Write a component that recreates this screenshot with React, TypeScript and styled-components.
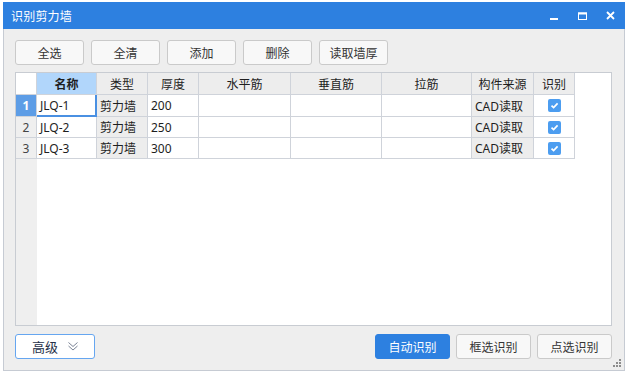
import React from "react";
import styled, { createGlobalStyle } from "styled-components";

const colors = {
  blue: "#2d80e0",
  border: "#c6cbd3",
  grid: "#cfd3da",
  panel: "#eeeeee",
  text: "#222222",
};

interface Row {
  name: string;
  type: string;
  thick: string;
  source: string;
}

const rows: Row[] = [
  { name: "JLQ-1", type: "剪力墙", thick: "200", source: "CAD读取" },
  { name: "JLQ-2", type: "剪力墙", thick: "250", source: "CAD读取" },
  { name: "JLQ-3", type: "剪力墙", thick: "300", source: "CAD读取" },
];

const columns = ["名称", "类型", "厚度", "水平筋", "垂直筋", "拉筋", "构件来源", "识别"];

const GlobalStyle = createGlobalStyle`
  html, body {
    margin: 0;
    background: #fff;
  }
  body {
    font-family: "Noto Sans", "Noto Sans CJK SC", sans-serif;
    font-size: 12px;
    color: ${colors.text};
  }
  * {
    box-sizing: border-box;
  }
`;

const Check = () => (
  <CheckBox>
    <svg width="9" height="9" viewBox="0 0 9 9">
      <path d="M1.5 4.6 L3.6 6.6 L7.6 2.4" stroke="#fff" strokeWidth="1.7" fill="none" />
    </svg>
  </CheckBox>
);

const DoubleDown = () => (
  <svg width="10" height="9" viewBox="0 0 10 9">
    <path d="M0.5 0.5 L5 4.5 L9.5 0.5 M0.5 4 L5 8 L9.5 4" stroke="#7b8496" strokeWidth="1" fill="none" />
  </svg>
);

export default function App() {
  return (
    <>
      <GlobalStyle />
      <Window>
        <TitleBar>
          <Title>识别剪力墙</Title>
          <Controls>
            <Ctrl>
              <svg width="8" height="8" viewBox="0 0 8 8">
                <rect x="0" y="6" width="8" height="2" fill="#fff" />
              </svg>
            </Ctrl>
            <Ctrl>
              <svg width="9" height="8" viewBox="0 0 9 8">
                <rect x="0.5" y="1" width="8" height="6.5" stroke="#fff" strokeWidth="1" fill="none" />
                <rect x="0" y="0.5" width="9" height="2" fill="#fff" />
              </svg>
            </Ctrl>
            <Ctrl>
              <svg width="9" height="9" viewBox="0 0 9 9">
                <path d="M1 1 L8 8 M8 1 L1 8" stroke="#fff" strokeWidth="1.8" />
              </svg>
            </Ctrl>
          </Controls>
        </TitleBar>
        <Body>
          <Toolbar>
            <Button>全选</Button>
            <Button>全清</Button>
            <Button>添加</Button>
            <Button>删除</Button>
            <Button>读取墙厚</Button>
          </Toolbar>
          <TableArea>
            <Grid>
              <Cell $head $corner />
              {columns.map((c, i) => (
                <Cell key={c} $head $center $active={i === 0}>
                  {c}
                </Cell>
              ))}
              {rows.map((r, i) => (
                <React.Fragment key={r.name}>
                  <RowNum $active={i === 0}>{i + 1}</RowNum>
                  <Cell $selected={i === 0}>{r.name}</Cell>
                  <Cell $gray>{r.type}</Cell>
                  <Cell>{r.thick}</Cell>
                  <Cell />
                  <Cell />
                  <Cell />
                  <Cell $gray>{r.source}</Cell>
                  <Cell $center>
                    <Check />
                  </Cell>
                </React.Fragment>
              ))}
            </Grid>
          </TableArea>
          <Footer>
            <MoreButton>
              高级
              <DoubleDown />
            </MoreButton>
            <ActionGroup>
              <Button $primary $wide>自动识别</Button>
              <Button $wide>框选识别</Button>
              <Button $wide>点选识别</Button>
            </ActionGroup>
          </Footer>
        </Body>
        <Grip>
          <svg width="9" height="9" viewBox="0 0 9 9" fill="#8c8c8c">
            <rect x="6" y="0" width="2" height="2" />
            <rect x="3" y="3" width="2" height="2" />
            <rect x="6" y="3" width="2" height="2" />
            <rect x="0" y="6" width="2" height="2" />
            <rect x="3" y="6" width="2" height="2" />
            <rect x="6" y="6" width="2" height="2" />
          </svg>
        </Grip>
      </Window>
    </>
  );
}

const Window = styled.div`
  position: relative;
  margin: 2px 0 0 3px;
  width: 622px;
  height: 369px;
  display: flex;
  flex-direction: column;
`;

const TitleBar = styled.div`
  height: 27px;
  flex-shrink: 0;
  display: flex;
  align-items: center;
  justify-content: space-between;
  padding: 0 8px 0 8px;
  background: ${colors.blue};
`;

const Title = styled.div`
  color: #fff;
  font-size: 12px;
  letter-spacing: 0.2px;
`;

const Controls = styled.div`
  display: flex;
  gap: 14px;
`;

const Ctrl = styled.div`
  width: 14px;
  height: 14px;
  display: flex;
  align-items: center;
  justify-content: center;
`;

const Body = styled.div`
  flex: 1;
  display: flex;
  flex-direction: column;
  gap: 7px;
  padding: 11px 12px 11px 11px;
  background: ${colors.panel};
  border: 1px solid ${colors.border};
  border-top: none;
`;

const Toolbar = styled.div`
  display: flex;
  gap: 7px;
`;

const Button = styled.button<{ $primary?: boolean; $wide?: boolean }>`
  width: ${(p) => (p.$wide ? 75 : 69)}px;
  height: 25px;
  padding: 0;
  font-family: inherit;
  font-size: 12px;
  border-radius: 3px;
  border: 1px solid ${(p) => (p.$primary ? colors.blue : "#cacaca")};
  background: ${(p) => (p.$primary ? colors.blue : "#f8f8f8")};
  color: ${(p) => (p.$primary ? "#fff" : "#333")};
`;

const TableArea = styled.div`
  flex: 1;
  border: 1px solid #c8ccd2;
  background: linear-gradient(to right, #efefef 21px, #fff 21px);
`;

const Grid = styled.div`
  display: grid;
  grid-template-columns: 21px 60px 51px 51px 92px 91px 90px 62px 41px;
  grid-template-rows: 22px 22px 21px 21px;
`;

const Cell = styled.div<{
  $head?: boolean;
  $corner?: boolean;
  $center?: boolean;
  $gray?: boolean;
  $active?: boolean;
  $selected?: boolean;
}>`
  display: flex;
  align-items: center;
  justify-content: ${(p) => (p.$center ? "center" : "flex-start")};
  padding: 0 ${(p) => (p.$center ? 0 : 3)}px;
  white-space: nowrap;
  overflow: hidden;
  border-right: ${(p) => (p.$selected ? "2px solid #4a90e2" : `1px solid ${colors.grid}`)};
  border-bottom: ${(p) => (p.$selected ? "2px solid #4a90e2" : `1px solid ${colors.grid}`)};
  background: ${(p) =>
    p.$corner ? "#fff" : p.$active ? "#b1d6fb" : p.$head || p.$gray ? "#ededed" : "#fff"};
  font-weight: ${(p) => (p.$active ? 700 : 400)};
  color: #1e1e1e;
`;

const RowNum = styled.div<{ $active?: boolean }>`
  display: flex;
  align-items: center;
  justify-content: center;
  border-right: 1px solid ${colors.grid};
  border-bottom: 1px solid ${colors.grid};
  background: ${(p) => (p.$active ? "#5d9de6" : "#efefef")};
  color: ${(p) => (p.$active ? "#fff" : "#444")};
  font-weight: ${(p) => (p.$active ? 700 : 400)};
`;

const CheckBox = styled.span`
  width: 13px;
  height: 13px;
  border-radius: 2px;
  background: #4c9df0;
  display: flex;
  align-items: center;
  justify-content: center;
`;

const Footer = styled.div`
  display: flex;
  justify-content: space-between;
  align-items: center;
  margin-top: 1px;
`;

const MoreButton = styled.button`
  width: 80px;
  height: 25px;
  padding: 0;
  display: flex;
  align-items: center;
  justify-content: center;
  gap: 10px;
  font-family: inherit;
  font-size: 13px;
  color: #263048;
  background: #fff;
  border: 1px solid #66a6f0;
  border-radius: 3px;
`;

const ActionGroup = styled.div`
  display: flex;
  gap: 6px;
`;

const Grip = styled.div`
  position: absolute;
  right: 3px;
  bottom: 3px;
  line-height: 0;
`;
